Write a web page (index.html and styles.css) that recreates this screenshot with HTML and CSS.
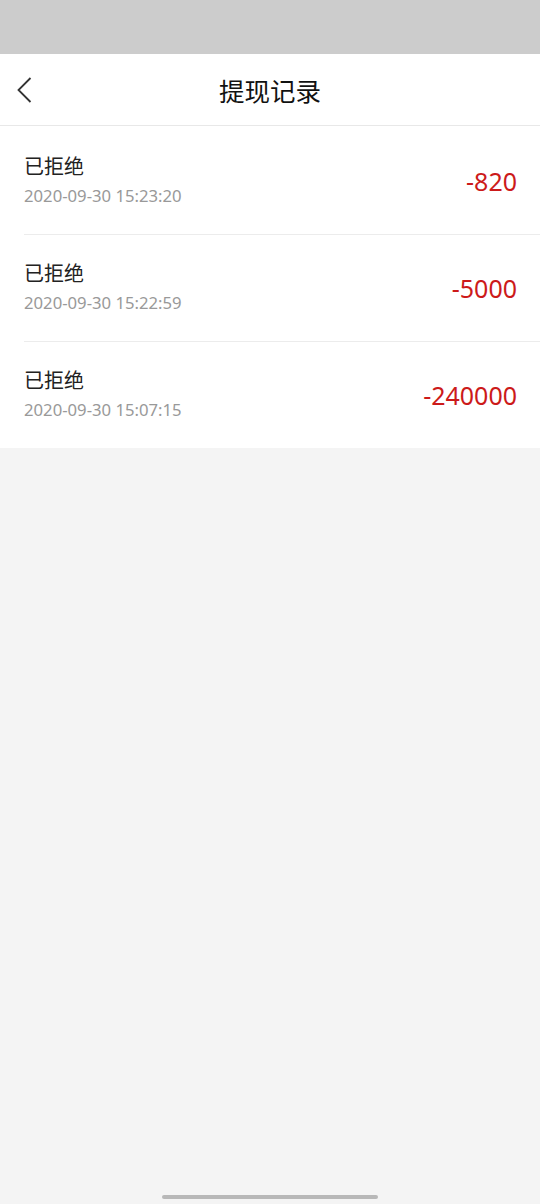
FILE: index.html
```html
<!DOCTYPE html>
<html lang="zh-CN">
<head>
<meta charset="utf-8">
<title>提现记录</title>
<link rel="stylesheet" href="styles.css">
</head>
<body>
<div class="page">
  <div class="statusbar"></div>
  <header class="navbar">
    <button class="back" aria-label="返回">
      <svg width="18" height="28" viewBox="0 0 18 28"><path d="M15.5 2 L3.5 14 L15.5 26" fill="none" stroke="#333" stroke-width="1.8"/></svg>
    </button>
    <h1 class="title">提现记录</h1>
  </header>
  <ul class="list">
    <li class="item">
      <div class="info">
        <div class="status">已拒绝</div>
        <div class="time">2020-09-30 15:23:20</div>
      </div>
      <div class="amount">-820</div>
    </li>
    <li class="item">
      <div class="info">
        <div class="status">已拒绝</div>
        <div class="time">2020-09-30 15:22:59</div>
      </div>
      <div class="amount">-5000</div>
    </li>
    <li class="item">
      <div class="info">
        <div class="status">已拒绝</div>
        <div class="time">2020-09-30 15:07:15</div>
      </div>
      <div class="amount">-240000</div>
    </li>
  </ul>
  <div class="filler"></div>
  <div class="homebar"><span></span></div>
</div>
</body>
</html>
```
FILE: styles.css
```css
* { box-sizing: border-box; }
html, body {
  margin: 0;
  padding: 0;
  background: #f4f4f4;
  font-family: "Noto Sans", "Noto Sans CJK SC", sans-serif;
}
.page {
  width: 540px;
  height: 1204px;
  display: flex;
  flex-direction: column;
  background: #f4f4f4;
}
.statusbar {
  height: 54px;
  background: #cccccc;
  flex: none;
}
.navbar {
  height: 72px;
  background: #fff;
  border-bottom: 1px solid #e8e8e8;
  display: flex;
  align-items: center;
  justify-content: center;
  position: relative;
  flex: none;
}
.back {
  position: absolute;
  left: 15px;
  top: 22px;
  border: 0;
  background: none;
  padding: 0;
  width: 22px;
  height: 28px;
}
.back svg { display: block; }
.title {
  margin: 0;
  font-size: 25.5px;
  font-weight: 400;
  color: #111;
  font-family: "Noto Sans CJK SC", sans-serif;
  line-height: 1;
}
.list {
  list-style: none;
  margin: 0;
  padding: 1px 0 0 24px;
  background: #fff;
  flex: none;
}
.item {
  height: 107px;
  display: flex;
  align-items: center;
  justify-content: space-between;
  padding-right: 23px;
  border-top: 1px solid #ececec;
}
.item:first-child { border-top: 0; }
.info {
  display: flex;
  flex-direction: column;
  gap: 6px;
}
.status {
  font-size: 20px;
  color: #222;
  line-height: 24px;
  font-family: "Noto Sans CJK SC", sans-serif;
}
.time {
  font-size: 16.7px;
  color: #999;
  line-height: 24px;
}
.amount {
  font-size: 25px;
  color: #cc1a1a;
  line-height: 30px;
}
.filler { flex: 1; }
.homebar {
  height: 14px;
  display: flex;
  justify-content: center;
  flex: none;
}
.homebar span {
  width: 216px;
  height: 4px;
  border-radius: 2px;
  background: #b8b8b8;
  margin-top: 5px;
}
```
